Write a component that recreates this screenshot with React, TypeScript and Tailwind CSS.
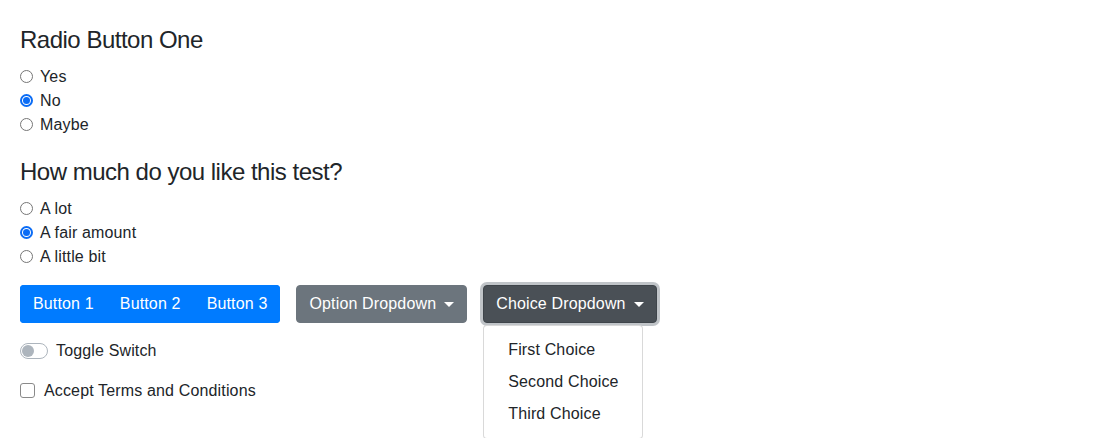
import React, { useState } from "react";

const Radio = ({ checked }: { checked: boolean }) =>
  checked ? (
    <span className="w-[13px] h-[13px] rounded-full border-2 border-[#0b6cf5] flex items-center justify-center shrink-0">
      <span className="w-[7px] h-[7px] rounded-full bg-[#0b6cf5]" />
    </span>
  ) : (
    <span className="w-[13px] h-[13px] rounded-full border border-[#767676] bg-white shrink-0" />
  );

function RadioGroup({ options, selected }: { options: string[]; selected: string }) {
  const [value, setValue] = useState(selected);
  return (
    <div>
      {options.map((o) => (
        <label key={o} className="flex items-center h-6 gap-[7px] cursor-pointer" onClick={() => setValue(o)}>
          <Radio checked={value === o} />
          <span>{o}</span>
        </label>
      ))}
    </div>
  );
}

const Caret = () => (
  <span className="inline-block ml-[8px] w-0 h-0 border-t-[5px] border-t-white border-x-[5px] border-x-transparent align-middle" />
);

export default function App() {
  const [open, setOpen] = useState(true);
  const [accepted, setAccepted] = useState(false);
  const [toggle, setToggle] = useState(false);

  return (
    <div className="min-h-screen bg-white px-5 pt-[26px] font-['Liberation_Sans',Arial,sans-serif] text-base tracking-[0.15px] text-[#212529]">
      <h4 className="text-2xl leading-[1.2] font-medium tracking-[-0.5px] mb-[10px]">Radio Button One</h4>
      <RadioGroup options={["Yes", "No", "Maybe"]} selected="No" />

      <h4 className="text-2xl leading-[1.2] font-medium tracking-[-0.5px] mt-[21px] mb-[10px]">How much do you like this test?</h4>
      <RadioGroup options={["A lot", "A fair amount", "A little bit"]} selected="A fair amount" />

      {/* Buttons */}
      <div className="flex items-start mt-4">
        <div className="flex rounded overflow-hidden bg-[#007bff] text-white">
          {["Button 1", "Button 2", "Button 3"].map((b) => (
            <button key={b} className="px-3 py-1.5 border border-[#007bff] leading-6">
              {b}
            </button>
          ))}
        </div>

        <button className="ml-4 px-3 py-1.5 border border-[#6c757d] bg-[#6c757d] text-white leading-6 rounded">
          Option Dropdown
          <Caret />
        </button>

        <div className="relative ml-4">
          <button
            onClick={() => setOpen(!open)}
            className="px-3 py-1.5 border border-[#3f454b] bg-[#4a5056] text-white leading-6 rounded shadow-[0_0_0_3px_rgba(130,138,145,0.5)]"
          >
            Choice Dropdown
            <Caret />
          </button>
          {open && (
            <div className="absolute left-0 top-full mt-[2px] w-40 py-2 bg-white border border-black/15 rounded z-10">
              {["First Choice", "Second Choice", "Third Choice"].map((c) => (
                <div key={c} className="px-6 py-1 leading-6 whitespace-nowrap">
                  {c}
                </div>
              ))}
            </div>
          )}
        </div>
      </div>

      {/* Toggle */}
      <label className="flex items-center h-6 mt-4 cursor-pointer" onClick={() => setToggle(!toggle)}>
        <span className="w-7 h-4 rounded-full border border-[#adb5bd] bg-white flex items-center px-[1px] shrink-0">
          <span className="w-3 h-3 rounded-full bg-[#adb5bd]" />
        </span>
        <span className="ml-2">Toggle Switch</span>
      </label>

      {/* Checkbox */}
      <label className="flex items-center h-6 mt-4 cursor-pointer" onClick={() => setAccepted(!accepted)}>
        <span className="w-[15px] h-[15px] rounded-[3px] border border-[#8a8a8a] bg-white shrink-0" />
        <span className="ml-[9px]">Accept Terms and Conditions</span>
      </label>
    </div>
  );
}
